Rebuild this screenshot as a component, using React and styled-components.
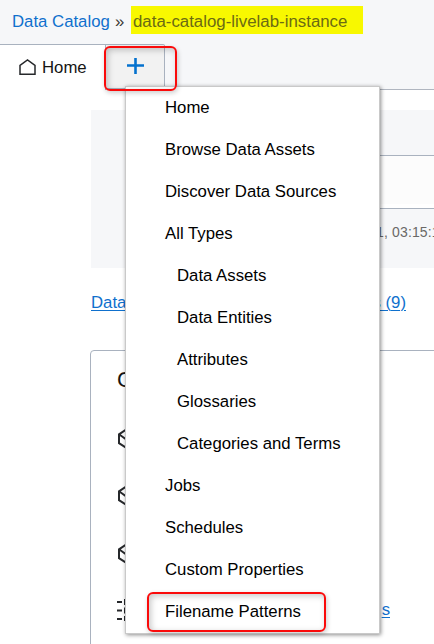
import React from "react";
import styled, { createGlobalStyle } from "styled-components";

const Global = createGlobalStyle`
  * { box-sizing: border-box; }
  body { margin: 0; background: #fff; overflow: hidden; }
`;

const Page = styled.div`
  position: relative;
  width: 434px;
  height: 644px;
  overflow: hidden;
  background: #fff;
  color: #161513;
  font: 16.75px/20px "Liberation Sans", Arial, sans-serif;
`;

const Header = styled.header`
  height: 90px;
  background: #f6f7f9;
`;

const Breadcrumb = styled.nav`
  display: flex;
  align-items: flex-start;
  height: 44px;
  padding: 6px 0 0 12px;
  line-height: 32px;
  white-space: pre;
`;

const Crumb = styled.span`
  width: 98px;
  color: #0f70cd;
`;

const Separator = styled.span`
  width: 21px;
  padding-left: 5px;
  color: #3b3935;
`;

const Highlight = styled.span`
  height: 28px;
  width: 232px;
  padding-left: 2px;
  background: #f8f800;
  color: #6b6b14;
  font-size: 16.85px;
`;

const Tabs = styled.div`
  display: flex;
  height: 46px;
`;

const Tab = styled.div`
  display: flex;
  align-items: center;
  width: 106px;
  padding-left: 18px;
  gap: 6px;
  background: #fff;
  border-top: 1px solid #a9b2bf;
  border-right: 1px solid #a9b2bf;
`;

const AddTab = styled.div`
  display: flex;
  width: 59px;
  height: 45px;
  padding: 13px 0 0 20px;
  background: #f2f2f2;
  border: 1px solid #a9b2bf;
  border-left: 0;
  border-radius: 0 2px 0 0;
`;

const TabLine = styled.div`
  flex: 1;
  border-bottom: 1px solid #b0b6c0;
`;

const Summary = styled.section`
  margin: 20px 0 0 91px;
  height: 158px;
  background: #f6f7f9;
  padding: 45px 0 0 60px;
`;

const Field = styled.div`
  height: 54px;
  border: solid #a9b2bf;
  border-width: 1px 0;
  background: #fcfcfc;
  box-shadow: inset 0 -4px #fff;
`;

const Updated = styled.div`
  margin: 14px 0 0 225px;
  font-size: 14px;
  line-height: 18px;
  letter-spacing: 0.15px;
  color: #6a6967;
  white-space: nowrap;
`;

const Links = styled.div`
  display: flex;
  justify-content: space-between;
  width: 315px;
  margin: 25px 0 0 91px;
`;

const Link = styled.a`
  color: #0f70cd;
  text-decoration: underline;
  text-decoration-thickness: 1px;
  text-underline-offset: 2px;
`;

const Card = styled.section`
  margin: 37px 0 0 90px;
  width: 400px;
  height: 310px;
  padding: 17px 0 0 26px;
  border: 1px solid #a9b2bf;
  border-radius: 4px;
`;

const CardTitle = styled.div`
  height: 61px;
  font-size: 22px;
  line-height: 24px;
`;

const CardRow = styled.div`
  display: flex;
  height: ${(p) => p.$h || 57}px;
`;

const LastRow = styled(CardRow)`
  width: 273px;
  justify-content: space-between;
  padding-top: 2px;
`;

const AssetLink = styled(Link)`
  margin-top: 3px;
`;

const Menu = styled.div`
  position: absolute;
  left: 125px;
  top: 86px;
  width: 255px;
  border: 1px solid #c9c9c9;
  background: #fff;
  box-shadow: 1px 1px 4px rgba(0, 0, 0, 0.45);
  color: #000;
`;

const MenuItem = styled.div`
  display: flex;
  align-items: center;
  height: 42px;
  padding-left: ${(p) => (p.$nested ? 51 : 39)}px;
  white-space: nowrap;
`;

const Callout = styled.div`
  position: absolute;
  left: ${(p) => p.$x}px;
  top: ${(p) => p.$y}px;
  width: ${(p) => p.$w}px;
  height: ${(p) => p.$h}px;
  border: 2px solid #fa0a0a;
  border-radius: 6px;
  box-shadow: 1px 2px 5px rgba(0, 0, 0, 0.2), inset 2px 2px 6px rgba(0, 0, 0, 0.22);
`;

const HomeIcon = () => (
  <svg width="18" height="18" viewBox="0 0 18 18" fill="none" stroke="#26282b" strokeWidth="1.5">
    <path d="M2 15.2V6.3L9.5 1L17 6.3V15.2Z" />
  </svg>
);

const PlusIcon = () => (
  <svg width="20" height="20" viewBox="0 0 20 20" stroke="#0572ce" strokeWidth="2.6">
    <path d="M1 7.5H18M9.5 -1V16" />
  </svg>
);

const CubeIcon = () => (
  <svg width="20" height="20" viewBox="0 0 20 20" fill="none" stroke="#26282b" strokeWidth="2">
    <path d="M10 0L2 5.3V14.2L10 19.3L18 14.2V5.3ZM2 5.3L10 11L18 5.3M10 11V19" />
  </svg>
);

const ListIcon = () => (
  <svg width="22" height="24" viewBox="0 0 22 24" stroke="#26282b" strokeWidth="2">
    <path d="M0 5H5M0 13.5H5M0 22H5M8 5H22M8 13.5H22M8 22H22" />
    <path d="M8 2V8M8 10.5V16.5M8 19V24" />
  </svg>
);

const items = [
  ["Home"],
  ["Browse Data Assets"],
  ["Discover Data Sources"],
  ["All Types"],
  ["Data Assets", true],
  ["Data Entities", true],
  ["Attributes", true],
  ["Glossaries", true],
  ["Categories and Terms", true],
  ["Jobs"],
  ["Schedules"],
  ["Custom Properties"],
  ["Filename Patterns"],
];

export default function App() {
  return (
    <Page>
      <Global />
      <Header>
        <Breadcrumb>
          <Crumb>Data Catalog</Crumb>
          <Separator>»</Separator>
          <Highlight>data-catalog-livelab-instance</Highlight>
        </Breadcrumb>
        <Tabs>
          <Tab>
            <HomeIcon />
            Home
          </Tab>
          <AddTab>
            <PlusIcon />
          </AddTab>
          <TabLine />
        </Tabs>
      </Header>
      <Summary>
        <Field />
        <Updated>1, 03:15:1</Updated>
      </Summary>
      <Links>
        <Link>Data</Link>
        <Link>s (9)</Link>
      </Links>
      <Card>
        <CardTitle>C</CardTitle>
        <CardRow><CubeIcon /></CardRow>
        <CardRow $h={58}><CubeIcon /></CardRow>
        <CardRow $h={51}><CubeIcon /></CardRow>
        <LastRow>
          <ListIcon />
          <AssetLink>s</AssetLink>
        </LastRow>
      </Card>
      <Menu>
        {items.map(([label, nested]) => (
          <MenuItem key={label} $nested={nested}>{label}</MenuItem>
        ))}
      </Menu>
      <Callout $x={104} $y={46} $w={73} $h={45} />
      <Callout $x={147} $y={592} $w={179} $h={40} />
    </Page>
  );
}
